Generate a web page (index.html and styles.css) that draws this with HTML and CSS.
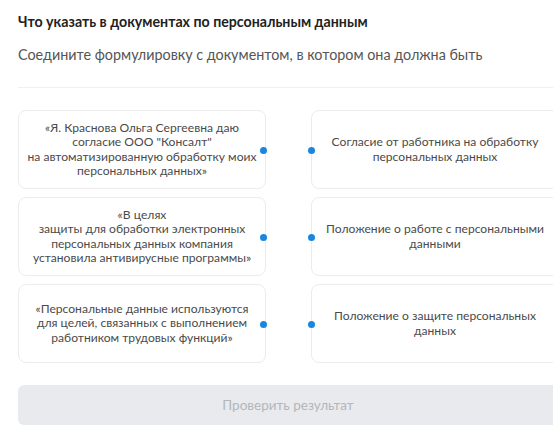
FILE: index.html
```html
<!DOCTYPE html>
<html lang="ru">
<head>
<meta charset="utf-8">
<link rel="stylesheet" href="styles.css">
</head>
<body>
<div class="page">
  <h1 class="title">Что указать в документах по персональным данным</h1>
  <p class="subtitle">Соедините формулировку с документом, в котором она должна быть</p>
  <div class="sep"></div>
  <div class="grid">
    <div class="card left"><p>«Я. Краснова Ольга Сергеевна даю<br>согласие ООО "Консалт"<br>на автоматизированную обработку моих<br>персональных данных»</p><span class="dot"></span></div>
    <div class="card right"><p>Согласие от работника на обработку<br>персональных данных</p><span class="dot"></span></div>
    <div class="card left"><p>«В целях<br>защиты для обработки электронных<br>персональных данных компания<br>установила антивирусные программы»</p><span class="dot"></span></div>
    <div class="card right"><p>Положение о работе с персональными<br>данными</p><span class="dot"></span></div>
    <div class="card left"><p>«Персональные данные используются<br>для целей, связанных с выполнением<br>работником трудовых функций»</p><span class="dot"></span></div>
    <div class="card right"><p>Положение о защите персональных<br>данных</p><span class="dot"></span></div>
  </div>
  <button class="check" type="button">Проверить результат</button>
</div>
</body>
</html>
```
FILE: styles.css
```css
html, body {
  margin: 0;
  padding: 0;
  background: #ffffff;
  overflow: hidden;
}
body {
  font-family: Lato, "Open Sans", sans-serif;
  color: #333;
}
.page {
  width: 540px;
  padding: 12px 0 0 18px;
}
.title {
  margin: 0;
  font-size: 14.2px;
  line-height: 20px;
  font-weight: 700;
  color: #222;
}
.subtitle {
  margin: 12px 0 0;
  font-size: 14.35px;
  line-height: 22px;
  font-weight: 400;
  color: #555;
}
.sep {
  height: 1px;
  background: #f0f0f0;
  margin-top: 21px;
}
.grid {
  display: grid;
  grid-template-columns: 248px 248px;
  grid-auto-rows: 79px;
  column-gap: 45px;
  row-gap: 8px;
  margin-top: 22px;
}
.card {
  position: relative;
  border: 1px solid #ececec;
  border-radius: 8px;
  display: flex;
  align-items: center;
  justify-content: center;
  text-align: center;
  box-sizing: border-box;
}
.card p {
  margin: 0;
  font-size: 12.1px;
  line-height: 14.5px;
  color: #4a4a4a;
}
.dot {
  position: absolute;
  top: 50%;
  width: 7px;
  height: 7px;
  margin-top: -3px;
  border-radius: 50%;
  background: #1a86e0;
}
.left .dot { right: -2px; }
.right .dot { left: -4px; }
.check {
  display: block;
  width: 540px;
  height: 40px;
  margin-top: 22px;
  border: none;
  border-radius: 6px;
  background: #e9eaed;
  color: #b3b6bb;
  font-family: Lato, "Open Sans", sans-serif;
  font-size: 13.5px;
  padding: 0;
}
```
